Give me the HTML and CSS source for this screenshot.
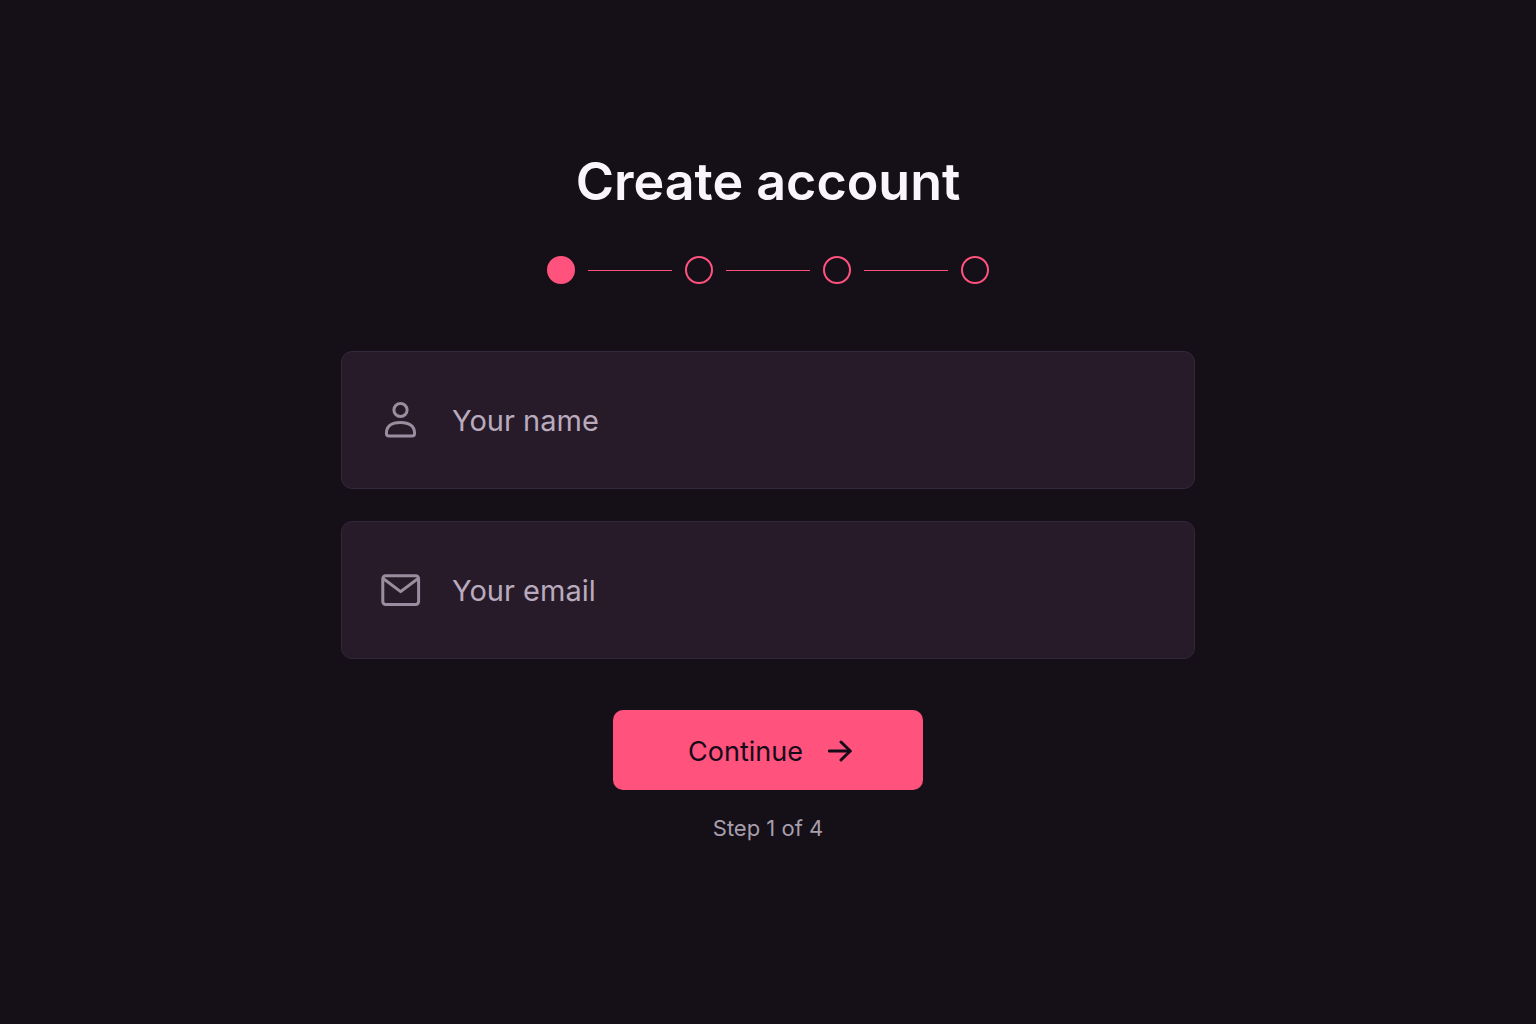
FILE: index.html
```
<!DOCTYPE html>
<html lang="en">
	<head>
		<meta charset="utf-8">
		<meta name="viewport" content="width=device-width, initial-scale=1.0">
		<title>Create account</title>
		<link rel="stylesheet" href="styles.css">
	</head>
	<body>
		<main class="signup">
			<h1 class="title">Create account</h1>

			<ol class="steps" aria-label="Progress">
				<li class="dot active" aria-current="step"></li>
				<li class="line" aria-hidden="true"></li>
				<li class="dot"></li>
				<li class="line" aria-hidden="true"></li>
				<li class="dot"></li>
				<li class="line" aria-hidden="true"></li>
				<li class="dot"></li>
			</ol>

			<form class="form">
				<label class="field" for="name">
					<svg class="icon" viewBox="0 0 40 40" aria-hidden="true">
						<circle cx="19.5" cy="10" r="6.6"/>
						<path d="M8.2 36 H30.8 Q33.6 36 33.6 33.2 C33.6 26.4 28.6 22.4 19.5 22.4 C10.4 22.4 5.4 26.4 5.4 33.2 Q5.4 36 8.2 36 Z"/>
					</svg>
					<input class="input" id="name" type="text" placeholder="Your name" aria-label="Your name">
				</label>

				<label class="field" for="email">
					<svg class="icon" viewBox="0 0 40 40" aria-hidden="true">
						<rect x="1.8" y="5.8" width="35.8" height="28.6" rx="2.8"/>
						<path d="M2.5 8.8 L19.6 21.6 L36.8 8.8"/>
					</svg>
					<input class="input" id="email" type="email" placeholder="Your email" aria-label="Your email">
				</label>

				<button class="button" type="submit">
					Continue
					<svg class="arrow" viewBox="0 0 24 24" aria-hidden="true">
						<path d="M1.2 12 H22"/>
						<path d="M13 3 L22.2 12 L13 21"/>
					</svg>
				</button>
			</form>

			<p class="count">Step 1 of 4</p>
		</main>
	</body>
</html>
```

FILE: styles.css
```
* {
	box-sizing: border-box;
}

body {
	margin: 0;
	background-color: #151017;
	color: #faf5fc;
	font-family: Inter, "Liberation Sans", sans-serif;
}

.signup {
	display: flex;
	flex-direction: column;
	align-items: center;
	max-width: 902px;
	margin: 0 auto;
	padding: 150px 24px 48px;
}

.title {
	margin: 0;
	font-size: 52px;
	line-height: 64px;
	font-weight: 600;
	text-align: center;
}

/* progress dots */
.steps {
	display: flex;
	align-items: center;
	gap: 13px;
	width: 100%;
	max-width: 442px;
	margin: 42px 0 0;
	padding: 0;
	list-style: none;
}

.dot {
	flex: none;
	width: 28px;
	height: 28px;
	border: 2px solid #ff527d;
	border-radius: 50%;
}

.dot.active {
	background-color: #ff527d;
}

.line {
	flex: 1;
	height: 1px;
	background-color: #ff527d;
}

/* form */
.form {
	display: flex;
	flex-direction: column;
	align-items: center;
	gap: 32px;
	width: 100%;
	margin-top: 67px;
}

.field {
	display: flex;
	align-items: center;
	gap: 31px;
	width: 100%;
	padding: 48px 39px;
	border: 1px solid #33283a;
	border-radius: 11px;
	background-color: #271b29;
}

.icon {
	flex: none;
	width: 40px;
	height: 40px;
	fill: none;
	stroke: #9b8d9f;
	stroke-width: 3;
	stroke-linejoin: round;
}

.input {
	flex: 1;
	min-width: 0;
	height: 40px;
	padding: 0;
	border: 0;
	outline: 0;
	background: none;
	color: #faf5fc;
	font-family: inherit;
	font-size: 29px;
}

.input::placeholder {
	color: #b9abbd;
	opacity: 1;
}

.field:focus-within {
	border-color: #ff527d;
}

.button {
	display: flex;
	align-items: center;
	justify-content: center;
	gap: 25px;
	width: 310px;
	max-width: 100%;
	height: 80px;
	margin-top: 19px;
	padding: 2px 0 0 4px;
	border: 0;
	border-radius: 10px;
	background-color: #ff527d;
	color: #150a18;
	font-family: inherit;
	font-size: 27px;
	cursor: pointer;
}

.arrow {
	width: 24px;
	height: 24px;
	fill: none;
	stroke: currentColor;
	stroke-width: 3;
	stroke-linecap: round;
	stroke-linejoin: round;
}

.count {
	margin: 24px 0 0;
	color: #a79ead;
	font-size: 22px;
	line-height: 28px;
}
```
